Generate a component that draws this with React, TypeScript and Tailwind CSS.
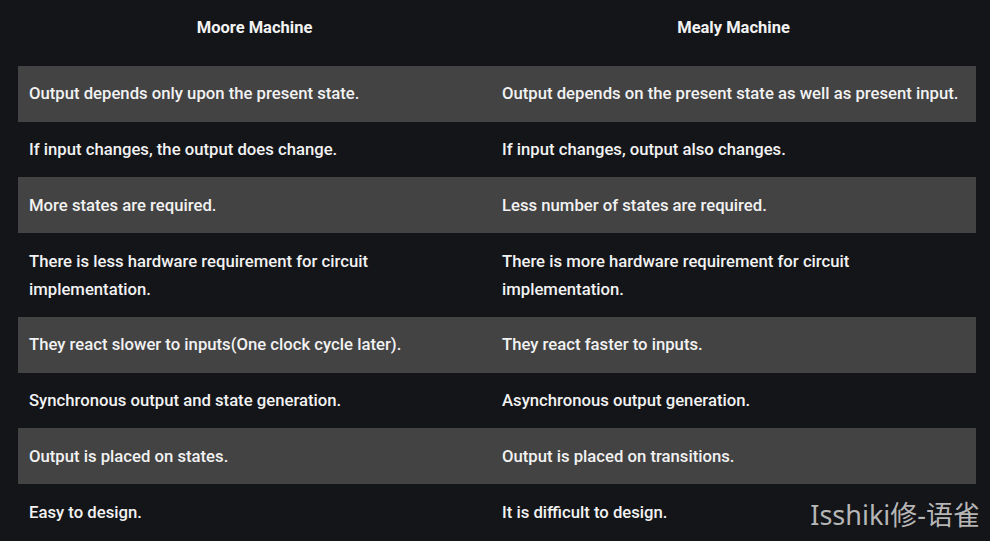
import React from 'react';

const rows: [string, string][] = [
  ['Output depends only upon the present state.', 'Output depends on the present state as well as present input.'],
  ['If input changes, the output does change.', 'If input changes, output also changes.'],
  ['More states are required.', 'Less number of states are required.'],
  ['There is less hardware requirement for circuit implementation.', 'There is more hardware requirement for circuit implementation.'],
  ['They react slower to inputs(One clock cycle later).', 'They react faster to inputs.'],
  ['Synchronous output and state generation.', 'Asynchronous output generation.'],
  ['Output is placed on states.', 'Output is placed on transitions.'],
  ['Easy to design.', 'It is difficult to design.'],
];

const App: React.FC = () => {
  return (
    <div
      className="relative w-[990px] h-[541px] overflow-hidden bg-[#141519] text-[#f2f2f2]"
      style={{ fontFamily: 'Roboto, "Liberation Sans", sans-serif' }}
    >
      <div className="ml-[18px] w-[958px]">
        {/* Header */}
        <div className="grid grid-cols-[473px_485px] h-[56px] items-center font-bold text-[16.5px]">
          <div className="text-center">Moore Machine</div>
          <div className="text-center">Mealy Machine</div>
        </div>

        {/* Rows */}
        <div className="mt-[10px]">
          {rows.map(([moore, mealy], i) => (
            <div
              key={i}
              className={`grid grid-cols-[473px_485px] text-[16.7px] font-medium leading-[28px] ${
                i % 2 === 0 ? 'bg-[#434343]' : ''
              }`}
            >
              <div className="pt-[14.4px] pb-[13.35px] pl-[11px] pr-[12px]">{moore}</div>
              <div className="pt-[14.4px] pb-[13.35px] pl-[11px] pr-[12px]">{mealy}</div>
            </div>
          ))}
        </div>
      </div>

      {/* Watermark */}
      <div
        className="absolute right-[10px] bottom-[6px] text-[27px] text-[#d4d4d4]/85"
        style={{ fontFamily: '"Noto Sans", "Noto Sans CJK SC", sans-serif' }}
      >
        Isshiki修-语雀
      </div>
    </div>
  );
};

export default App;
